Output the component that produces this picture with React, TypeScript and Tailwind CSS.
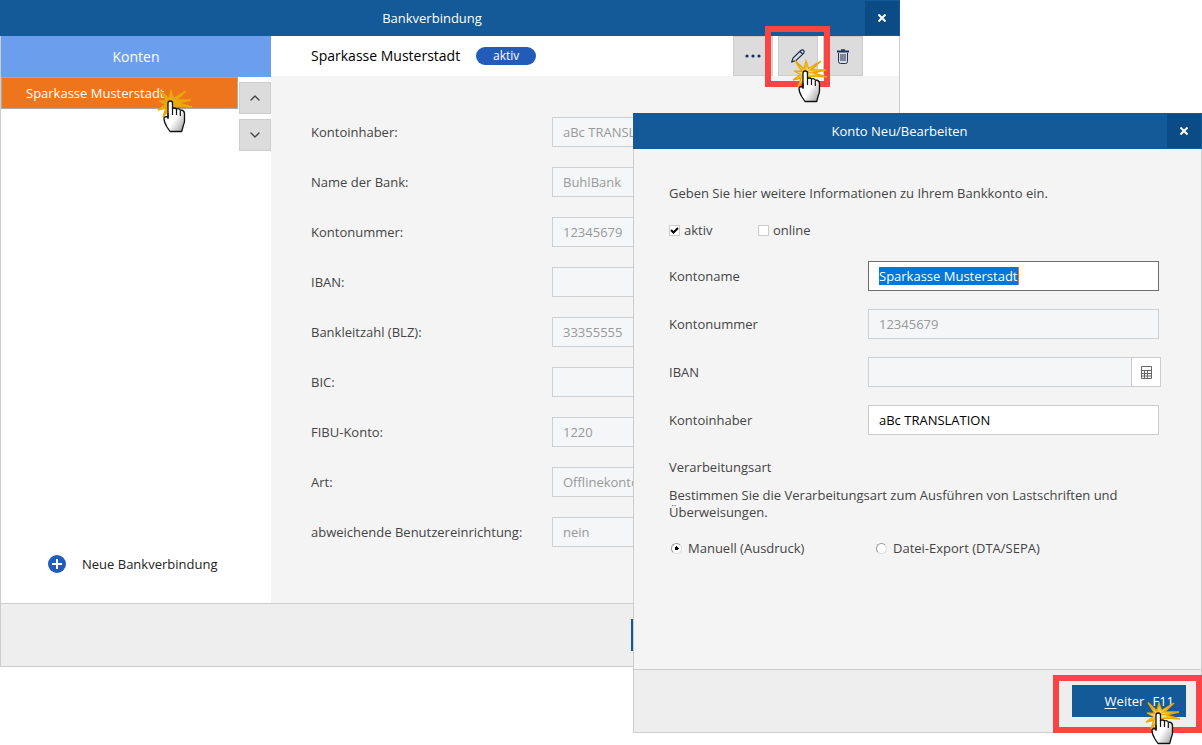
import * as React from 'react';
import { ChevronDown, ChevronUp } from 'lucide-react';
import { clsx } from 'clsx';

interface AccountField {
  id: string;
  label: string;
  value: string;
}

const accountFields: AccountField[] = [
  { id: 'holder', label: 'Kontoinhaber:', value: 'aBc TRANSLATION' },
  { id: 'bank', label: 'Name der Bank:', value: 'BuhlBank' },
  { id: 'number', label: 'Kontonummer:', value: '12345679' },
  { id: 'iban', label: 'IBAN:', value: '' },
  { id: 'blz', label: 'Bankleitzahl (BLZ):', value: '33355555' },
  { id: 'bic', label: 'BIC:', value: '' },
  { id: 'fibu', label: 'FIBU-Konto:', value: '1220' },
  { id: 'type', label: 'Art:', value: 'Offlinekonto' },
  { id: 'users', label: 'abweichende Benutzereinrichtung:', value: 'nein' },
];

// Hand pointer with a click burst behind the fingertip
function ClickPointer({ className, solid = false }: { className?: string; solid?: boolean }) {
  return (
    <svg
      viewBox="0 0 40 46"
      className={clsx('pointer-events-none absolute z-10 h-[46px] w-10', className)}
      aria-hidden="true"
    >
      <path
        d="M5 1.5 L14 10 L16 2 L18.500 9.500 L31 2 L21.500 11 L36 11 L23 14 L37 18 L24 17 L16 18 L8 28 L11 19 L3 21 L10.500 15.500 L4 12 L12 12.500 Z"
        fill={solid ? '#eba70a' : '#f8dc74'}
        stroke="#e8a808"
        strokeWidth="1.400"
      />
      {!solid && <path d="M16 14 L9 6 M16 14 V6 M16 14 L26 6 M16 14 L31 12 M16 14 L7 20" stroke="#e8a808" />}
      <path
        d="M13 29 V14 Q13 12 15.200 12 Q17.500 12 17.500 14 V19.500 Q20 18.300 21.500 20 Q24 19 25.300 21 Q29.500 21 29.500 25 V32 Q29.500 34 28.300 36.500 L26.700 42.500 H15 L12 38 Q9 33 9 29.500 Q9 27.500 13 27.500 Z"
        fill="url(#handShade)"
        stroke="#111"
        strokeWidth="1.300"
        strokeLinejoin="round"
      />
      <path d="M13 24 V29.500 M17.500 19 V26 M21.500 20 V26 M25.300 21.500 V27" fill="none" stroke="#111" strokeWidth="1.200" />
      <defs>
        <linearGradient id="handShade" x1="0" y1="0" x2="1" y2="1">
          <stop offset="0.550" stopColor="#fff" />
          <stop offset="1" stopColor="#999" />
        </linearGradient>
      </defs>
    </svg>
  );
}

function TitleBar({ title }: { title: string }) {
  return (
    <header className="flex h-9 items-center bg-[#145998] text-white">
      <h2 className="flex-1 text-center font-medium">{title}</h2>
      <button
        type="button"
        aria-label="Schließen"
        className="m-px flex h-[34px] w-[34px] items-center justify-center bg-[#0c4c86]"
      >
        <svg viewBox="0 0 8 8" className="h-2 w-2" stroke="currentColor" strokeWidth="2">
          <path d="M0.500 0.500 L7.500 7.500 M7.500 0.500 L0.500 7.500" />
        </svg>
      </button>
    </header>
  );
}

function ToolButton({ label, children }: { label: string; children: React.ReactNode }) {
  return (
    <button
      type="button"
      aria-label={label}
      className="flex h-10 w-10 items-center justify-center border border-[#cdcdcd] bg-[#dcdcdc] text-[#1f2f5c]"
    >
      {children}
    </button>
  );
}

function AccountsWindow() {
  return (
    <section className="mr-[302px]">
      <TitleBar title="Bankverbindung" />
      <div className="flex border-x border-[#cdcdcd]">
        <aside className="flex w-[270px] shrink-0 flex-col bg-white">
          <h3 className="h-[41px] bg-[#6c9eee] text-center text-sm leading-[41px] font-medium text-white">
            Konten
          </h3>
          <div className="flex flex-1 gap-px">
            <div className="relative flex-1">
              <button
                type="button"
                className="h-8 w-full border border-[#b5a697] bg-[#ee751c] pl-6 text-left text-white"
              >
                Sparkasse Musterstadt
              </button>
              <ClickPointer solid className="top-3 left-[154px]" />
            </div>
            <div className="flex flex-col gap-[5px] pt-[5px]">
              <button
                type="button"
                aria-label="Nach oben"
                className="flex size-8 items-center justify-center border border-[#cdcdcd] bg-[#dcdcdc] text-[#444]"
              >
                <ChevronUp className="size-4" strokeWidth={2} />
              </button>
              <button
                type="button"
                aria-label="Nach unten"
                className="flex size-8 items-center justify-center border border-[#cdcdcd] bg-[#dcdcdc] text-[#444]"
              >
                <ChevronDown className="size-4" strokeWidth={2} />
              </button>
            </div>
          </div>
          <button type="button" className="mb-[30px] flex items-center gap-4 pl-[47px] font-medium text-[#222]">
            <svg viewBox="0 0 18 18" className="size-[18px]">
              <circle cx="9" cy="9" r="9" fill="#225cb8" />
              <path d="M9 4 V14 M4 9 H14" stroke="#fff" strokeWidth="2" />
            </svg>
            Neue Bankverbindung
          </button>
        </aside>

        <main className="min-w-0 flex-1 bg-[#f4f4f4]">
          <div className="flex h-10 items-center bg-white pr-9 pl-10">
            <h3 className="text-sm font-medium text-black">Sparkasse Musterstadt</h3>
            <span className="ml-4 h-[18px] w-[60px] rounded-full bg-[#225cb8] text-center text-xs leading-[18px] font-medium text-white">
              aktiv
            </span>
            <div className="ml-auto flex gap-[5px]">
              <ToolButton label="Mehr">
                <svg viewBox="0 0 16 4" className="h-1 w-4" fill="currentColor">
                  <circle cx="2" cy="2" r="1.600" />
                  <circle cx="8" cy="2" r="1.600" />
                  <circle cx="14" cy="2" r="1.600" />
                </svg>
              </ToolButton>
              <div className="relative">
                <ToolButton label="Bearbeiten">
                  <svg viewBox="0 0 14 14" className="size-3.5" fill="none" stroke="currentColor" strokeWidth="1.200">
                    <path d="M0.800 12.800 L2 9 L9.500 1.800 Q11.300 0.300 12.700 1.500 Q13.800 3 12.300 4.600 L4.800 11.600 Z M9 2.500 L11.600 5" />
                  </svg>
                </ToolButton>
                <div className="pointer-events-none absolute -top-[10px] -left-[13px] z-10 h-[61px] w-[65px] border-[6px] border-[#fd4445]" />
                <ClickPointer className="top-[23px] left-3" />
              </div>
              <ToolButton label="Löschen">
                <svg viewBox="0 0 12 15" className="h-[15px] w-3" fill="none" stroke="currentColor">
                  <path d="M0 2.500 H12" strokeWidth="2" />
                  <path d="M4 1 H8" strokeWidth="1.500" />
                  <path d="M1.500 4 V12.500 Q1.500 14.500 3.500 14.500 H8.500 Q10.500 14.500 10.500 12.500 V4" />
                  <path d="M4 5 V12 M6 5 V12 M8 5 V12" />
                </svg>
              </ToolButton>
            </div>
          </div>

          <div className="flex flex-col gap-5 pt-[41px] pr-9 pb-14 pl-10">
            {accountFields.map((field) => (
              <div key={field.id} className="flex items-center">
                <label htmlFor={field.id} className="w-[241px] shrink-0 font-medium">
                  {field.label}
                </label>
                <input
                  id={field.id}
                  type="text"
                  disabled
                  defaultValue={field.value}
                  className="h-[30px] min-w-0 flex-1 border border-[#cdd0d3] bg-[#f4f6f8] px-2.5 text-[#999]"
                />
              </div>
            ))}
          </div>
        </main>
      </div>
      <footer className="border border-[#cdcdcd] bg-[#eee] py-[15px] pl-[630px]">
        <button type="button" aria-label="Weiter" className="block h-8 w-28 bg-[#145998]" />
      </footer>
    </section>
  );
}

function EditDialog() {
  const nameRef = React.useRef<HTMLInputElement>(null);

  React.useEffect(() => {
    nameRef.current?.focus();
    nameRef.current?.select();
  }, []);

  const inputClass = 'h-[30px] w-full min-w-0 border px-2.5 outline-none';
  const disabledClass = 'border-[#cdd0d3] bg-[#f4f6f8] text-[#999]';

  return (
    <section role="dialog" aria-label="Konto Neu/Bearbeiten" className="absolute top-[113px] right-0 left-[633px] z-20">
      <TitleBar title="Konto Neu/Bearbeiten" />
      <form className="border border-t-0 border-[#cdcdcd] bg-[#f4f4f4]">
        <div className="pt-9 pr-[42px] pb-28 pl-[35px] font-medium">
          <p className="leading-[17px]">Geben Sie hier weitere Informationen zu Ihrem Bankkonto ein.</p>

          <div className="mt-[19px] flex">
            <label className="flex w-[89px] items-center gap-1">
              <input
                type="checkbox"
                defaultChecked
                className="peer size-[11px] appearance-none border border-[#ccc] bg-white"
              />
              <svg
                viewBox="0 0 9 9"
                className="pointer-events-none -ml-[14px] hidden size-[9px] peer-checked:mr-px peer-checked:block"
                fill="none"
                stroke="#000"
                strokeWidth="2"
              >
                <path d="M1 4 L3.500 6.500 L8 2" />
              </svg>
              aktiv
            </label>
            <label className="flex items-center gap-1">
              <input type="checkbox" className="size-[11px] appearance-none border border-[#ccc] bg-white" />
              online
            </label>
          </div>

          <div className="mt-[22px] flex flex-col gap-[18px]">
            <div className="flex items-center">
              <label htmlFor="edit-name" className="w-[199px] shrink-0">
                Kontoname
              </label>
              <div className="relative flex-1 font-normal">
                <input
                  id="edit-name"
                  ref={nameRef}
                  type="text"
                  defaultValue="Sparkasse Musterstadt"
                  className={clsx(inputClass, 'peer border-[#6d6d6d] bg-white selection:bg-[#0078d7] selection:text-white')}
                />
                {/* caret at the end of the selected name */}
                <span className="pointer-events-none absolute top-1.5 left-[150px] hidden h-[18px] w-px bg-[#ee751c] peer-focus:block" />
              </div>
            </div>
            <div className="flex items-center">
              <label htmlFor="edit-number" className="w-[199px] shrink-0">
                Kontonummer
              </label>
              <div className="flex-1 font-normal">
                <input
                  id="edit-number"
                  type="text"
                  disabled
                  defaultValue="12345679"
                  className={clsx(inputClass, disabledClass)}
                />
              </div>
            </div>
            <div className="flex items-center">
              <label htmlFor="edit-iban" className="w-[199px] shrink-0">
                IBAN
              </label>
              <div className="-mr-0.5 flex flex-1 font-normal">
                <input id="edit-iban" type="text" disabled className={clsx(inputClass, disabledClass, 'border-r-0')} />
                <button
                  type="button"
                  aria-label="IBAN berechnen"
                  className="flex size-[30px] shrink-0 items-center justify-center border border-[#ccc] bg-white"
                >
                  <svg viewBox="0 0 11 13" className="h-[13px] w-[11px]" fill="none" stroke="#666">
                    <path d="M0.500 0.500 H10.500 V12.500 H0.500 Z M0.500 4.500 H10.500 M0.500 7.500 H10.500 M0.500 10 H10.500 M3.500 4.500 V12.500 M6.500 4.500 V12.500" />
                  </svg>
                </button>
              </div>
            </div>
            <div className="flex items-center">
              <label htmlFor="edit-holder" className="w-[199px] shrink-0">
                Kontoinhaber
              </label>
              <div className="flex-1 font-normal">
                <input
                  id="edit-holder"
                  type="text"
                  defaultValue="aBc TRANSLATION"
                  className={clsx(inputClass, 'border-[#ccc] bg-white text-black')}
                />
              </div>
            </div>
          </div>

          <fieldset className="mt-6">
            <legend className="leading-[17px]">Verarbeitungsart</legend>
            <p className="mt-[11px] leading-[17px]">
              Bestimmen Sie die Verarbeitungsart zum Ausführen von Lastschriften und Überweisungen.
            </p>
            <div className="mt-[18px] flex pl-0.5">
              <label className="flex w-[205px] items-center gap-1.5">
                <input
                  type="radio"
                  name="processing"
                  defaultChecked
                  className="size-[11px] appearance-none rounded-full border border-[#999] border-r-[#ddd] border-b-[#ddd] bg-white bg-[radial-gradient(circle,#000_2px,transparent_2px)]"
                />
                Manuell (Ausdruck)
              </label>
              <label className="flex items-center gap-1.5">
                <input
                  type="radio"
                  name="processing"
                  className="size-[11px] appearance-none rounded-full border border-[#999] border-r-[#ddd] border-b-[#ddd] bg-white"
                />
                Datei-Export (DTA/SEPA)
              </label>
            </div>
          </fieldset>
        </div>
        <footer className="flex justify-end border-t border-[#cdcdcd] bg-[#eee] py-[15px] pr-[15px]">
          <div className="relative">
            <button
              type="button"
              className="flex h-8 w-[114px] items-center justify-end gap-2 bg-[#145998] pr-3 font-medium text-white"
            >
              <span>
                <u className="underline-offset-2">W</u>eiter
              </span>
              <span className="font-normal">F11</span>
            </button>
            <div className="pointer-events-none absolute -top-[10px] -right-4 -left-[19px] h-[58px] border-[6px] border-[#fd4445]" />
            <ClickPointer className="top-4 left-[71px]" />
          </div>
        </footer>
      </form>
    </section>
  );
}

export default function App() {
  return (
    <div className="relative min-h-screen overflow-hidden bg-white font-['Open_Sans','Noto_Sans',sans-serif] text-[13px] leading-[18px] text-[#444]">
      <AccountsWindow />
      <EditDialog />
    </div>
  );
}
